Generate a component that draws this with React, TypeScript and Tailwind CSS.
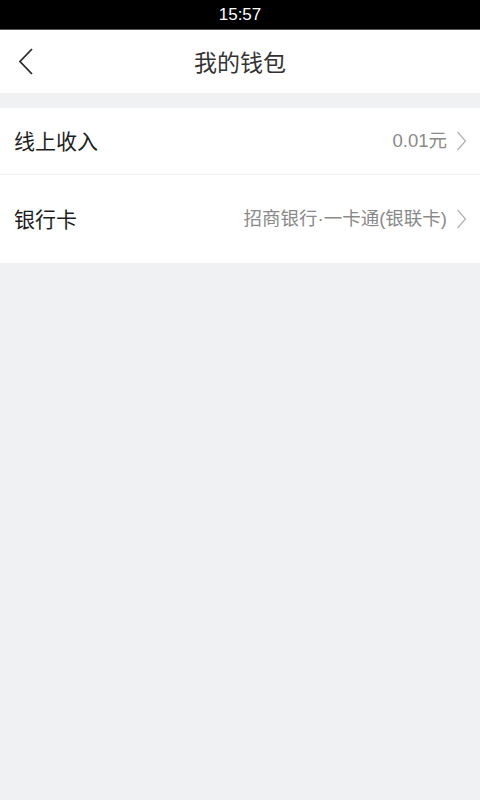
const font = { fontFamily: '"Noto Sans CJK SC", "Liberation Sans", sans-serif' }

const Chevron = () => (
  <svg width="11" height="20" viewBox="0 0 11 20" className="ml-[9px]">
    <path d="M1.5 1 L9.5 10 L1.5 19" fill="none" stroke="#b0b0b0" strokeWidth="1.2" />
  </svg>
)

const Row = ({ label, value }: { label: string; value: string }) => (
  <div className="flex items-center justify-between pl-[14px] pr-[13px] bg-white">
    <span className="text-[21px] text-[#1e1e1e]">{label}</span>
    <div className="flex items-center">
      <span className="text-[18.5px] text-[#8a8a8a]" style={{ fontFamily: '"Liberation Sans", "Noto Sans CJK SC", sans-serif' }}>
        {value}
      </span>
      <Chevron />
    </div>
  </div>
)

export default function App() {
  return (
    <div className="w-[480px] h-[800px] bg-[#f0f1f3] flex flex-col" style={font}>
      <div className="h-[30px] bg-black flex items-center justify-center border-b border-[#555]">
        <span className="text-white text-[17px]" style={{ fontFamily: '"Liberation Sans", sans-serif' }}>
          15:57
        </span>
      </div>
      <div className="h-[63px] bg-white flex items-center relative">
        <svg width="16" height="30" viewBox="0 0 16 30" className="ml-[18px]">
          <path d="M14 2 L2 14.5 L14 27" fill="none" stroke="#2a2a2a" strokeWidth="1.8" />
        </svg>
        <span className="absolute left-0 right-0 text-center text-[23px] text-[#333]">我的钱包</span>
      </div>
      <div className="h-[15px]" />
      <div className="flex flex-col">
        <div className="h-[67px] flex flex-col justify-center bg-white border-b border-[#f0f0f0]">
          <Row label="线上收入" value="0.01元" />
        </div>
        <div className="h-[88px] flex flex-col justify-center bg-white">
          <Row label="银行卡" value="招商银行·一卡通(银联卡)" />
        </div>
      </div>
    </div>
  )
}
